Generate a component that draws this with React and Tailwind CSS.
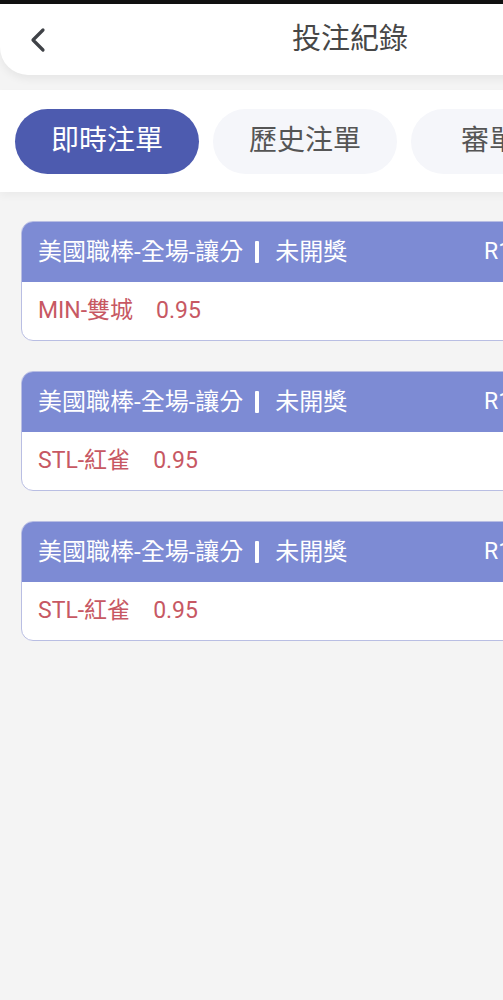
import React from "react";

const tabs = ["即時注單", "歷史注單", "審單中", "已取消"];

const bets = [
	{ league: "美國職棒-全場-讓分", status: "未開獎", code: "R1", pick: "MIN-雙城", odds: "0.95" },
	{ league: "美國職棒-全場-讓分", status: "未開獎", code: "R1", pick: "STL-紅雀", odds: "0.95" },
	{ league: "美國職棒-全場-讓分", status: "未開獎", code: "R1", pick: "STL-紅雀", odds: "0.95" },
];

const BetCard = ({ bet }) => (
	<div className="mx-[21px] rounded-[12px] border border-[#b9bee3] bg-white overflow-hidden">
		<div className="h-[60px] bg-[#7d8bd4] flex items-center pl-[16px] text-white text-[24px]">
			<div className="w-[446px] flex items-center shrink-0">
				<span>{bet.league}</span>
				<span className="inline-block w-[4px] h-[22px] bg-white ml-[12px] mr-[16px] rounded-[1px]" />
				<span>{bet.status}</span>
			</div>
			<span className="text-[23px]">{bet.code}</span>
		</div>
		<div className="h-[58px] flex items-center pl-[16px] text-[23px] text-[#c75863]">
			<span>{bet.pick}</span>
			<span className="ml-[23px]">{bet.odds}</span>
		</div>
	</div>
);

export default function App() {
	const [active, setActive] = React.useState(0);

	return (
		<div
			className="w-[503px] h-[1000px] overflow-hidden bg-[#f4f4f4]"
			style={{ fontFamily: "Roboto, 'Noto Sans CJK TC', sans-serif" }}>
			<div className="w-[700px]">
				{/* status strip */}
				<div className="h-[4px] bg-[#111]" />
				{/* Header */}
				<div className="h-[71px] bg-white rounded-bl-[28px] shadow-[0_4px_8px_rgba(0,0,0,0.06)] flex items-center relative">
					<svg
						className="ml-[28px]"
						width="20"
						height="26"
						viewBox="0 0 20 26"
						fill="none"
						stroke="#3f4247"
						strokeWidth="3.2"
						strokeLinecap="round"
						strokeLinejoin="round">
						<path d="M15 3 L5 13 L15 23" />
					</svg>
					<span className="absolute left-0 right-0 text-center text-[29px] text-[#474747] pointer-events-none">
						投注紀錄
					</span>
				</div>
				{/* Tabs */}
				<div className="mt-[15px] h-[102px] bg-white shadow-[0_4px_8px_rgba(0,0,0,0.04)] flex items-center gap-[14px] pl-[15px]">
					{tabs.map((t, i) => (
						<button
							key={t}
							onClick={() => setActive(i)}
							className={`w-[184px] h-[65px] rounded-full text-[28px] shrink-0 ${
								active === i ? "bg-[#4d5baf] text-white" : "bg-[#f5f6fa] text-[#555]"
							}`}>
							{t}
						</button>
					))}
				</div>
				{/* Bets */}
				<div className="mt-[29px] flex flex-col gap-[30px]">
					{bets.map((b, i) => (
						<BetCard key={i} bet={b} />
					))}
				</div>
			</div>
		</div>
	);
}
